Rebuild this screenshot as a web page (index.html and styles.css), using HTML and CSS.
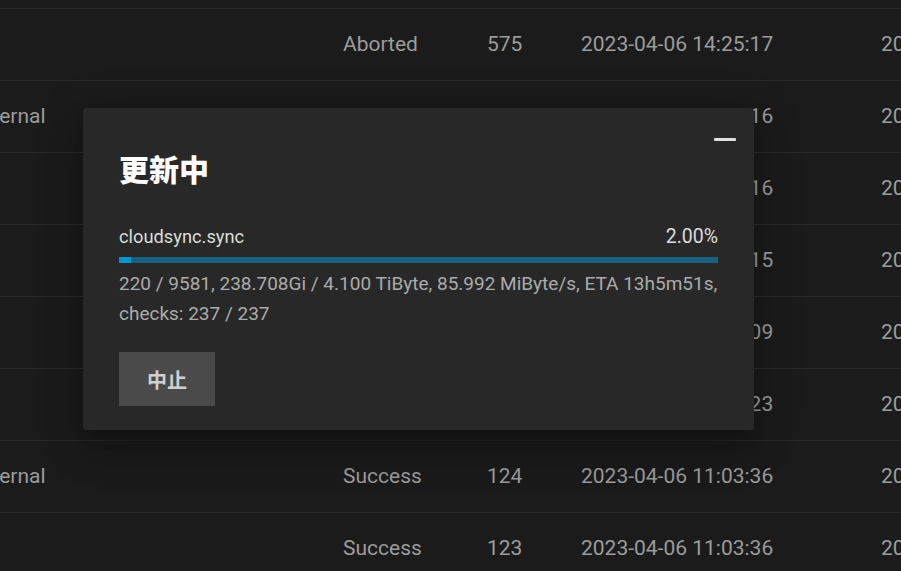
FILE: index.html
```html
<!DOCTYPE html>
<html lang="zh">
<head>
<meta charset="utf-8">
<title>更新中</title>
<link rel="stylesheet" href="styles.css">
</head>
<body>
<div class="table">
  <div class="row"><div class="c1">External</div><div class="c2">Success</div><div class="c3">576</div><div class="c4">2023-04-06 14:30:02</div><div class="c5">2023-04-06 14:30:02</div></div>
  <div class="row"><div class="c1"></div><div class="c2">Aborted</div><div class="c3">575</div><div class="c4">2023-04-06 14:25:17</div><div class="c5">2023-04-06 14:25:17</div></div>
  <div class="row"><div class="c1">External</div><div class="c2">Success</div><div class="c3">574</div><div class="c4">2023-04-06 14:20:16</div><div class="c5">2023-04-06 14:20:16</div></div>
  <div class="row"><div class="c1"></div><div class="c2">Success</div><div class="c3">573</div><div class="c4">2023-04-06 14:15:16</div><div class="c5">2023-04-06 14:15:16</div></div>
  <div class="row"><div class="c1"></div><div class="c2">Success</div><div class="c3">572</div><div class="c4">2023-04-06 14:10:15</div><div class="c5">2023-04-06 14:10:15</div></div>
  <div class="row"><div class="c1"></div><div class="c2">Success</div><div class="c3">571</div><div class="c4">2023-04-06 14:05:09</div><div class="c5">2023-04-06 14:05:09</div></div>
  <div class="row"><div class="c1"></div><div class="c2">Success</div><div class="c3">570</div><div class="c4">2023-04-06 14:00:23</div><div class="c5">2023-04-06 14:00:23</div></div>
  <div class="row"><div class="c1">External</div><div class="c2">Success</div><div class="c3">124</div><div class="c4">2023-04-06 11:03:36</div><div class="c5">2023-04-06 11:03:36</div></div>
  <div class="row"><div class="c1"></div><div class="c2">Success</div><div class="c3">123</div><div class="c4">2023-04-06 11:03:36</div><div class="c5">2023-04-06 11:03:36</div></div>
</div>

<div class="dialog">
  <div class="minimize" aria-label="minimize"></div>
  <h1 class="title">更新中</h1>
  <div class="job-head">
    <span class="job-name">cloudsync.sync</span>
    <span class="job-pct">2.00%</span>
  </div>
  <div class="bar"><div class="bar-fill" style="width:2%"></div></div>
  <div class="job-desc">220 / 9581, 238.708Gi / 4.100 TiByte, 85.992 MiByte/s, ETA 13h5m51s, checks: 237 / 237</div>
  <button class="abort">中止</button>
</div>
</body>
</html>
```
FILE: styles.css
```css
html, body {
  margin: 0;
  padding: 0;
  width: 901px;
  height: 571px;
  overflow: hidden;
  background: #1b1b1b;
  font-family: Roboto, "Noto Sans CJK SC", sans-serif;
}

.table {
  margin-top: -64px;
  margin-left: -30px;
  width: 1200px;
}

.row {
  display: grid;
  grid-template-columns: 373px 144px 94px 300px 300px;
  border-top: 1px solid #2a2a2a;
  align-items: center;
  color: #9c9c9c;
  font-size: 21px;
  line-height: 24px;
  padding-bottom: 1px;
  box-sizing: border-box;
  height: 72px;
  white-space: nowrap;
}

.dialog {
  position: absolute;
  left: 83px;
  top: 108px;
  width: 599px;
  padding: 42px 36px 24px 36px;
  background: #282828;
  border-radius: 4px;
  box-shadow: 0 11px 15px -7px rgba(0,0,0,.2), 0 24px 38px 3px rgba(0,0,0,.14), 0 9px 46px 8px rgba(0,0,0,.12);
}

.minimize {
  position: absolute;
  top: 30px;
  right: 18px;
  width: 22px;
  height: 3px;
  background: #e0e0e0;
  border-radius: 1px;
}

.title {
  margin: 0;
  font-size: 30px;
  line-height: 36px;
  font-weight: 900;
  color: #ffffff;
  font-family: "Noto Sans CJK SC", sans-serif;
}

.job-head {
  margin-top: 39px;
  display: flex;
  justify-content: space-between;
  align-items: baseline;
  line-height: 24px;
  color: #dcdcdc;
}

.job-name {
  font-size: 18.3px;
}

.job-pct {
  font-size: 19.5px;
}

.bar {
  margin-top: 8px;
  height: 6px;
  background: #17607f;
}

.bar-fill {
  height: 100%;
  background: #0095d5;
}

.job-desc {
  margin-top: 6px;
  font-size: 19px;
  line-height: 30px;
  color: #ababab;
}

.abort {
  margin-top: 23px;
  width: 96px;
  height: 54px;
  border: none;
  border-radius: 0;
  background: #4a4a4a;
  color: #d0d0d0;
  font-family: "Noto Sans CJK SC", sans-serif;
  font-size: 20px;
  font-weight: 700;
  display: block;
}
```
